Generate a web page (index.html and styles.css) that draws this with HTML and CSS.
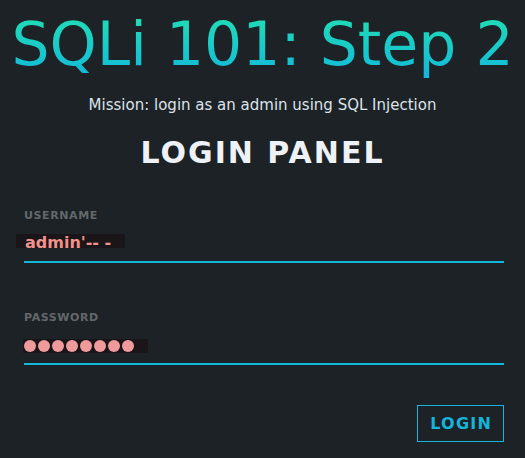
FILE: index.html
```html
<!DOCTYPE html>
<html lang="en">
<head>
<meta charset="utf-8">
<title>SQLi 101: Step 2</title>
<link rel="stylesheet" href="styles.css">
</head>
<body>
<main class="page">
  <h1 class="title">SQLi 101: Step 2</h1>
  <p class="mission">Mission: login as an admin using SQL Injection</p>
  <h2 class="panel-title">LOGIN PANEL</h2>
  <form class="form">
    <label class="label label-user">USERNAME</label>
    <div class="field field-user">
      <span class="value">admin'-- -</span>
    </div>
    <label class="label label-pass">PASSWORD</label>
    <div class="field field-pass">
      <span class="dots"><i></i><i></i><i></i><i></i><i></i><i></i><i></i><i></i></span>
    </div>
    <div class="actions">
      <button type="button" class="btn">LOGIN</button>
    </div>
  </form>
</main>
</body>
</html>
```
FILE: styles.css
```css
html, body {
  margin: 0;
  padding: 0;
  background: #1c2226;
}
body {
  font-family: "DejaVu Sans", sans-serif;
  width: 525px;
  height: 458px;
  overflow: hidden;
}
.page {
  padding-top: 9px;
  text-align: center;
}
.title {
  margin: 0;
  font-size: 60px;
  line-height: 70px;
  font-weight: normal;
  background: linear-gradient(180deg, #21dcb5 10%, #17c4cf 70%, #12b6dc 100%);
  -webkit-background-clip: text;
  background-clip: text;
  color: transparent;
  display: inline-block;
}
.mission {
  margin: 17px 0 0;
  font-size: 15px;
  line-height: 18px;
  color: #dde3ea;
}
.panel-title {
  margin: 21px 0 0;
  font-size: 30px;
  line-height: 35px;
  font-weight: bold;
  letter-spacing: 2px;
  color: #eef1f6;
}
.form {
  text-align: left;
  padding: 0 21px 0 24px;
  display: flex;
  flex-direction: column;
}
.label {
  display: block;
  font-size: 11px;
  line-height: 13px;
  font-weight: bold;
  letter-spacing: 0.6px;
  color: #63686b;
}
.label-user {
  margin-top: 39px;
}
.label-pass {
  margin-top: 48px;
}
.field {
  display: flex;
  align-items: flex-start;
  border-bottom: 2px solid #13b6db;
}
.field-user {
  margin-top: 12px;
  padding-bottom: 13px;
}
.field-pass {
  margin-top: 15px;
  padding-bottom: 10px;
}
.value {
  display: block;
  height: 14px;
  line-height: 17px;
  font-size: 16px;
  font-weight: bold;
  color: #f2928b;
  background: #1a1519;
  padding: 0 14px 0 9px;
  margin-left: -8px;
  overflow: visible;
}
.dots {
  display: flex;
  align-items: center;
  gap: 2px;
  height: 14px;
  padding: 0 14px 0 1px;
  margin-left: -1px;
  background: #1a1519;
}
.dots i {
  display: block;
  width: 12px;
  height: 12px;
  border-radius: 50%;
  background: #ef9b9c;
}
.actions {
  display: flex;
  justify-content: flex-end;
  margin-top: 40px;
}
.btn {
  font-family: "DejaVu Sans", sans-serif;
  font-size: 16px;
  line-height: 19px;
  font-weight: bold;
  letter-spacing: 1.2px;
  color: #15b4da;
  background: transparent;
  border: 1px solid #15b4da;
  padding: 8px 11px 8px 12px;
  margin: 0;
}
```
